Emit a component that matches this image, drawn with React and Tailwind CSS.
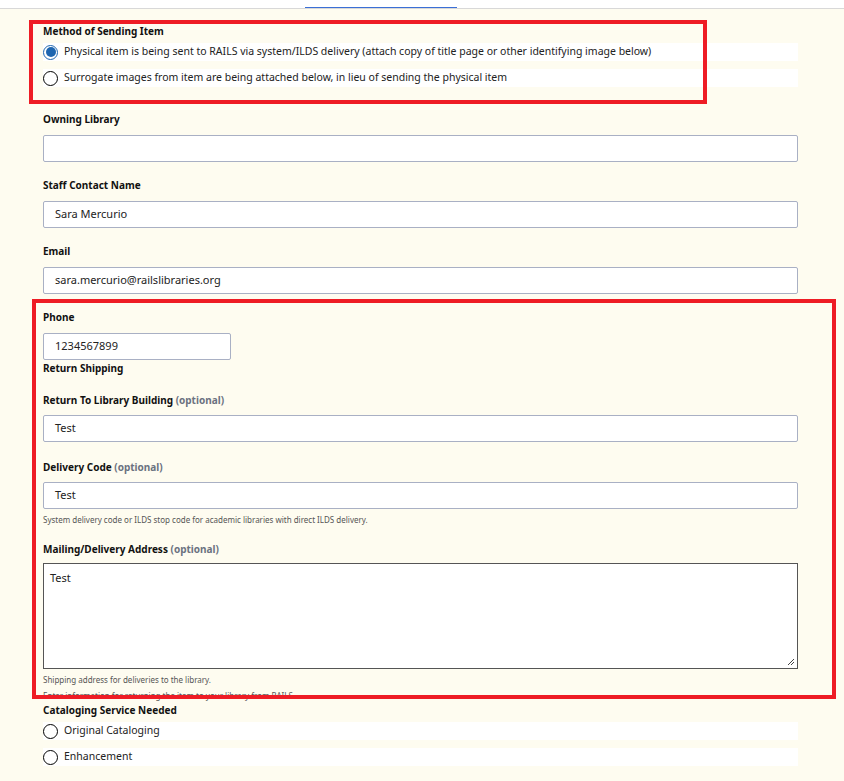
export default function App() {
  const font = { fontFamily: '"Noto Sans", "Liberation Sans", sans-serif' };
  const Label = ({ children, opt }) => (
    <div className="text-[10px] font-bold text-[#111] leading-[14px]">
      {children}
      {opt && <span className="text-[#6b7280]"> (optional)</span>}
    </div>
  );
  const Input = ({ value, w = "w-full" }) => (
    <div className={`${w} h-[27px] bg-white border border-[#a9b0c4] rounded-[2px] flex items-center px-[11px] text-[11px] text-[#222]`}>{value}</div>
  );
  const Radio = ({ checked, children }) => (
    <div className="flex items-center h-[18px] bg-white gap-[6px]">
      {checked ? (
        <span className="w-[15px] h-[15px] rounded-full border-[1.5px] border-[#1e66b0] flex items-center justify-center bg-white shrink-0">
          <span className="w-[10px] h-[10px] rounded-full bg-[#1e66b0]" />
        </span>
      ) : (
        <span className="w-[15px] h-[15px] rounded-full border-[1.5px] border-black bg-white shrink-0" />
      )}
      <span className="text-[10.5px] text-[#222]">{children}</span>
    </div>
  );
  return (
    <div style={font} className="relative w-[844px] h-[781px] bg-[#fefcf0] overflow-hidden">
      <div className="h-[9px] bg-white border-b border-[#d8d8d8] relative">
        <div className="absolute left-[305px] top-[7px] w-[152px] h-[1px] bg-[#3b6fd6]" />
      </div>
      <div className="pl-[43px] w-[798px]">
        <div className="mt-[15px]"><Label>Method of Sending Item</Label></div>
        <div className="mt-[5px] flex flex-col gap-[8px]">
          <Radio checked>Physical item is being sent to RAILS via system/ILDS delivery (attach copy of title page or other identifying image below)</Radio>
          <Radio>Surrogate images from item are being attached below, in lieu of sending the physical item</Radio>
        </div>
        <div className="mt-[25px]"><Label>Owning Library</Label></div>
        <div className="mt-[9px]"><Input value="" /></div>
        <div className="mt-[16px]"><Label>Staff Contact Name</Label></div>
        <div className="mt-[9px]"><Input value="Sara Mercurio" /></div>
        <div className="mt-[16px]"><Label>Email</Label></div>
        <div className="mt-[9px]"><Input value="sara.mercurio@railslibraries.org" /></div>
        <div className="mt-[16px]"><Label>Phone</Label></div>
        <div className="mt-[9px]"><Input value="1234567899" w="w-[188px]" /></div>
        <div className="mt-[1px]"><Label>Return Shipping</Label></div>
        <div className="mt-[18px]"><Label opt>Return To Library Building</Label></div>
        <div className="mt-[8px]"><Input value="Test" /></div>
        <div className="mt-[18px]"><Label opt>Delivery Code</Label></div>
        <div className="mt-[8px]"><Input value="Test" /></div>
        <div className="mt-[5px] text-[8px] text-[#555]">System delivery code or ILDS stop code for academic libraries with direct ILDS delivery.</div>
        <div className="mt-[16px]"><Label opt>Mailing/Delivery Address</Label></div>
        <div className="mt-[7px] h-[106px] bg-white border border-[#555] px-[6px] py-[6px] text-[11px] text-[#222] relative">
          Test
          <svg className="absolute right-[2px] bottom-[2px]" width="8" height="8" viewBox="0 0 8 8"><path d="M7 1L1 7M7 4L4 7" stroke="#444" strokeWidth="1" /></svg>
        </div>
        <div className="mt-[5px] text-[8px] text-[#555] leading-[12px]">Shipping address for deliveries to the library.</div>
        <div className="mt-[4px] text-[8px] text-[#555] leading-[12px]">Enter information for returning the item to your library from RAILS.</div>
        <div className="mt-[1px]"><Label>Cataloging Service Needed</Label></div>
        <div className="mt-[5px] flex flex-col gap-[8px]">
          <Radio>Original Cataloging</Radio>
          <Radio>Enhancement</Radio>
        </div>
      </div>
      <div className="absolute left-[29px] top-[20px] w-[678px] h-[84px] border-[4px] border-[#ee1c25]" />
      <div className="absolute left-[32px] top-[299px] w-[804px] h-[400px] border-[4px] border-[#ee1c25]" />
    </div>
  );
}
